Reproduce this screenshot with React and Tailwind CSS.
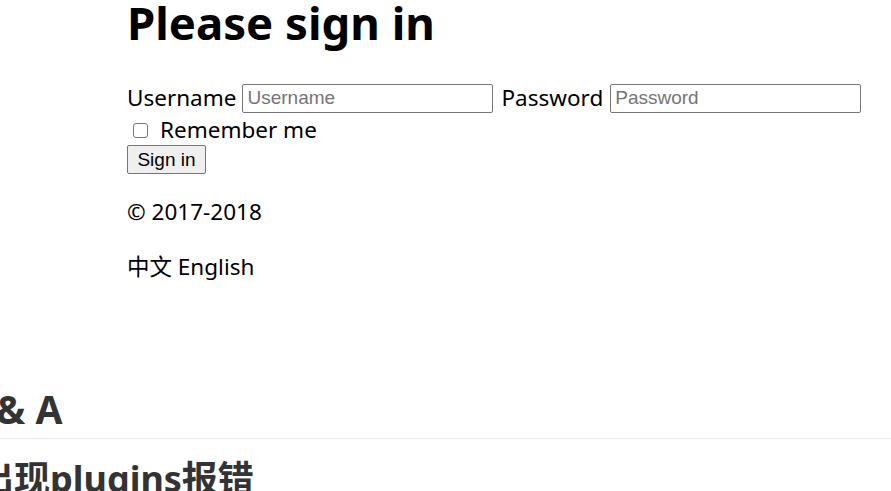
export default function App() {
  return (
    <div className="relative w-[891px] h-[491px] overflow-hidden bg-white text-black font-['Noto_Sans','Noto_Sans_CJK_SC',sans-serif]">
      {/* sign-in form screenshot */}
      <div className="pl-[127px]">
        <h1 className="text-[45.5px] font-bold leading-[56px] -mt-[6px]">Please sign in</h1>
        <form className="mt-[32px] text-[22.5px]">
          <div className="flex items-center h-[32px] leading-[32px]">
            <label>Username</label>
            <input
              className="ml-[6px] w-[251px] h-[29px] border border-[#767676] rounded-[2px] px-[4px] text-[19px] font-['Liberation_Sans',sans-serif] placeholder:text-[#757575] outline-none"
              placeholder="Username"
            />
            <label className="ml-[8px]">Password</label>
            <input
              className="ml-[7px] w-[251px] h-[29px] border border-[#767676] rounded-[2px] px-[4px] text-[19px] font-['Liberation_Sans',sans-serif] placeholder:text-[#757575] outline-none"
              placeholder="Password"
              type="password"
            />
          </div>
          <div className="flex items-center h-[32px] leading-[32px]">
            <span className="ml-[6px] w-[15px] h-[15px] border border-[#767676] rounded-[3px] bg-white" />
            <span className="ml-[12px]">Remember me</span>
          </div>
          <button
            type="button"
            className="block -mt-[1px] w-[79px] h-[29px] border border-[#767676] rounded-[2px] bg-[#efefef] text-[19px] font-['Liberation_Sans',sans-serif] leading-none"
          >
            Sign in
          </button>
        </form>
        <p className="mt-[22px] text-[22.5px] leading-[32px]">© 2017-2018</p>
        <p className="mt-[23px] text-[22.5px] leading-[32px]">中文 English</p>
      </div>

      {/* document below */}
      <div className="mt-[100px] text-[#333]">
        <h2 className="text-[39px] font-bold leading-[52px] -ml-[4px] pb-[3px] border-b border-[#eaeaea]">& A</h2>
        <h3 className="mt-[16px] text-[36px] font-bold leading-[48px] -ml-[22px]">出现plugins报错</h3>
      </div>
    </div>
  );
}
